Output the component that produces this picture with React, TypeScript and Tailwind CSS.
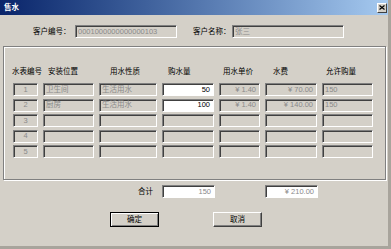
import React from 'react'

const font = { fontFamily: '"Liberation Sans", "Noto Sans CJK SC", sans-serif' }

const sunken =
  'h-[13px] border border-t-[#808080] border-l-[#808080] border-b-white border-r-white shadow-[inset_1px_1px_0_#404040] flex items-center text-[7.5px] leading-none px-[2px] overflow-hidden whitespace-nowrap'

type Row = {
  no: string
  place: string
  kind: string
  qty: string
  price: string
  fee: string
  allow: string
}

const rows: Row[] = [
  { no: '1', place: '卫生间', kind: '生活用水', qty: '50', price: '¥ 1.40', fee: '¥ 70.00', allow: '150' },
  { no: '2', place: '厨房', kind: '生活用水', qty: '100', price: '¥ 1.40', fee: '¥ 140.00', allow: '150' },
  { no: '3', place: '', kind: '', qty: '', price: '', fee: '', allow: '' },
  { no: '4', place: '', kind: '', qty: '', price: '', fee: '', allow: '' },
  { no: '5', place: '', kind: '', qty: '', price: '', fee: '', allow: '' },
]

const headers = [
  { label: '水表编号', w: 'w-[36px]' },
  { label: '安装位置', w: 'w-[62px]' },
  { label: '用水性质', w: 'w-[58px]' },
  { label: '购水量', w: 'w-[55px]' },
  { label: '用水单价', w: 'w-[50px]' },
  { label: '水费', w: 'w-[53px]' },
  { label: '允许购量', w: 'w-[40px]' },
]

const Field = ({ value, className = '' }: { value: string; className?: string }) => (
  <div className={`${sunken} bg-[#d4d0c8] text-[#8a8a8a] ${className}`}>{value}</div>
)

const Button = ({ label, isDefault }: { label: string; isDefault?: boolean }) => (
  <button
    className={`h-[15px] w-[49px] bg-[#d4d0c8] text-[7.5px] leading-none text-black flex items-center justify-center ${
      isDefault
        ? 'border border-black shadow-[inset_1px_1px_0_#fff,inset_-1px_-1px_0_#808080]'
        : 'border border-t-white border-l-white border-b-[#404040] border-r-[#404040] shadow-[inset_-1px_-1px_0_#808080]'
    }`}
  >
    {label}
  </button>
)

export default function App() {
  return (
    <div
      style={font}
      className="w-[391px] h-[249px] bg-[#d4d0c8] flex flex-col border-r-[3px] border-b-[3px] border-r-[#a8a49c] border-b-[#a8a49c] overflow-hidden"
    >
      {/* Title bar */}
      <div className="h-[15px] shrink-0 bg-gradient-to-r from-[#0a246a] to-[#a6caf0] flex items-center justify-between pl-[4px] pr-[1px]">
        <span className="text-white font-bold text-[7.5px] leading-none">售水</span>
        <div className="w-[10px] h-[10px] bg-[#d4d0c8] border border-t-white border-l-white border-b-[#404040] border-r-[#404040] flex items-center justify-center">
          <svg width="6" height="5" viewBox="0 0 6 5">
            <path d="M0.5 0.5 L5.5 4.5 M5.5 0.5 L0.5 4.5" stroke="black" strokeWidth="1.2" />
          </svg>
        </div>
      </div>

      {/* Customer info */}
      <div className="mt-[10px] h-[13px] flex items-center text-[7.5px] leading-none text-black">
        <span className="ml-[33px] w-[42px]">客户编号：</span>
        <Field value="0001000000000000103" className="w-[102px]" />
        <span className="ml-[16px] w-[39px]">客户名称：</span>
        <Field value="张三" className="w-[112px]" />
      </div>

      {/* Group box */}
      <div className="mt-[8px] ml-[3px] w-[383px] h-[134px] border border-[#808080] shadow-[1px_1px_0_#fff,inset_1px_1px_0_#fff] flex flex-col">
        <div className="mt-[19px] h-[12px] flex items-center text-[7.5px] leading-none text-black pl-[8px]">
          {headers.map((h) => (
            <span key={h.label} className={`${h.w} whitespace-nowrap`}>
              {h.label}
            </span>
          ))}
        </div>
        <div className="mt-[5px] pl-[9px] grid grid-cols-[25px_51px_58px_52px_41px_52px_51px] gap-x-[5px] gap-y-[2.5px]">
          {rows.map((r, i) => (
            <React.Fragment key={r.no}>
              <Field value={r.no} className="justify-center" />
              <Field value={r.place} />
              <Field value={r.kind} />
              {i < 2 ? (
                <div className={`${sunken} bg-white text-black justify-end pr-[3px]`}>{r.qty}</div>
              ) : (
                <Field value="" />
              )}
              <Field value={r.price} className="justify-end pr-[3px]" />
              <Field value={r.fee} className="justify-end pr-[3px]" />
              <Field value={r.allow} />
            </React.Fragment>
          ))}
        </div>
      </div>

      {/* Totals */}
      <div className="mt-[5px] h-[13px] flex items-center text-[7.5px] leading-none text-black">
        <span className="ml-[138px] w-[24px]">合计</span>
        <div className={`${sunken} w-[53px] bg-white text-[#8a8a8a] justify-end pr-[3px]`}>150</div>
        <div className={`${sunken} ml-[50px] w-[53px] bg-white text-[#8a8a8a] justify-end pr-[3px]`}>¥ 210.00</div>
      </div>

      {/* Buttons */}
      <div className="mt-[14px] flex items-center">
        <div className="ml-[110px]">
          <Button label="确定" isDefault />
        </div>
        <div className="ml-[54px]">
          <Button label="取消" />
        </div>
      </div>
    </div>
  )
}
